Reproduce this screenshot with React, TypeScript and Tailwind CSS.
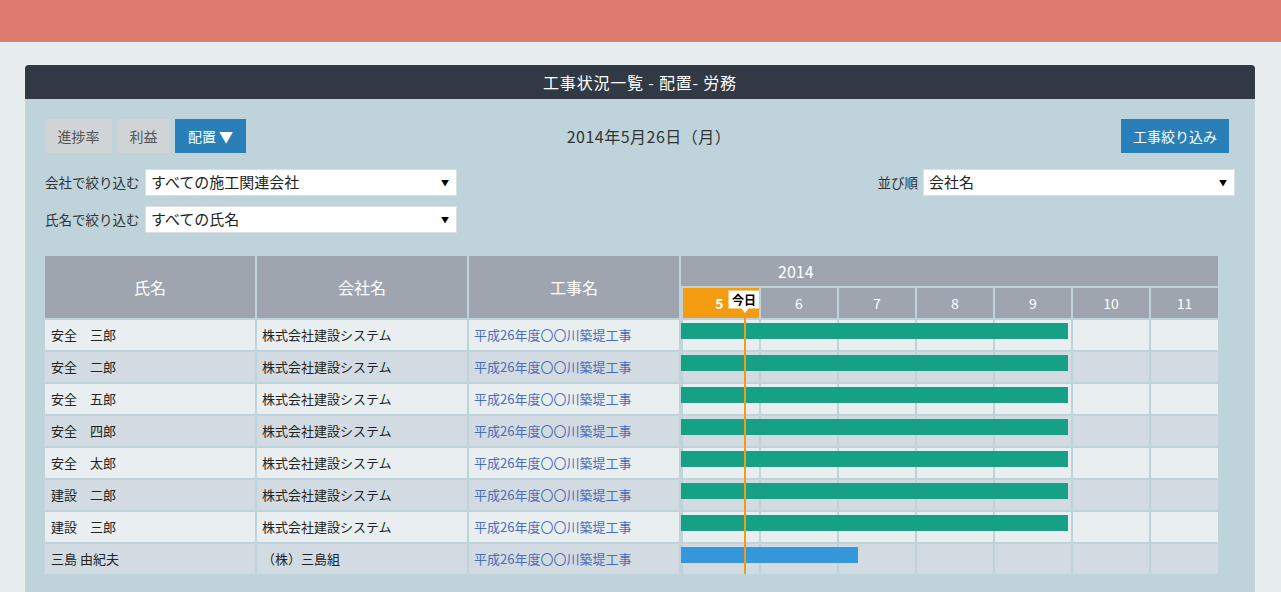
import React from 'react';

const rows = [
  { name: '安全　三郎', company: '株式会社建設システム', bar: 387, color: 'bg-[#16a085]' },
  { name: '安全　二郎', company: '株式会社建設システム', bar: 387, color: 'bg-[#16a085]' },
  { name: '安全　五郎', company: '株式会社建設システム', bar: 387, color: 'bg-[#16a085]' },
  { name: '安全　四郎', company: '株式会社建設システム', bar: 387, color: 'bg-[#16a085]' },
  { name: '安全　太郎', company: '株式会社建設システム', bar: 387, color: 'bg-[#16a085]' },
  { name: '建設　二郎', company: '株式会社建設システム', bar: 387, color: 'bg-[#16a085]' },
  { name: '建設　三郎', company: '株式会社建設システム', bar: 387, color: 'bg-[#16a085]' },
  { name: '三島 由紀夫', company: '（株）三島組', bar: 177, color: 'bg-[#3498db]' },
];

const months = ['5', '6', '7', '8', '9', '10', '11'];

function Select({ value }: { value: string }) {
  return (
    <div className="flex h-[27px] w-[312px] items-center justify-between border border-[#dcdfe1] bg-white pl-[5px] pr-[7px] text-[15px] text-[#222]">
      <span>{value}</span>
      <span className="text-[8px] text-black">▼</span>
    </div>
  );
}

const App = () => {
  return (
    <div
      className="min-h-screen bg-[#e8eef0]"
      style={{ fontFamily: '"Noto Sans CJK JP", "Noto Sans", sans-serif' }}
    >
      {/* top bar */}
      <div className="h-[42px] bg-[#e07b70]" />

      <div className="pl-[25px] pr-[26px] pt-[23px]">
        {/* title */}
        <div className="flex h-[34px] items-center justify-center rounded-t-[4px] bg-[#313945] text-[16px] tracking-[0.8px] text-white">
          工事状況一覧 - 配置- 労務
        </div>

        <div className="bg-[#bfd3da] px-[20px] pb-[30px] pt-[20px]">
          {/* toolbar */}
          <div className="grid h-[34px] grid-cols-[1fr_auto_1fr] items-center">
            <div className="flex h-full gap-[5px] text-[14px]">
              <button className="h-full w-[67px] bg-[#d0d4d6] text-[#555]">進捗率</button>
              <button className="h-full w-[53px] bg-[#d0d4d6] text-[#555]">利益</button>
              <button className="h-full w-[71px] bg-[#2980b9] text-white">配置 ▼</button>
            </div>
            <div className="pl-[18px] text-[16px] tracking-[0.5px] text-[#333]">2014年5月26日（月）</div>
            <div className="flex h-full justify-end pr-[6px]">
              <button className="h-full w-[108px] bg-[#2980b9] text-[14px] text-white">工事絞り込み</button>
            </div>
          </div>

          {/* filters */}
          <div className="mt-[16px] flex justify-between">
            <div className="flex flex-col gap-[10px]">
              <div className="flex items-center gap-[5px] text-[13.5px] text-[#333]">
                <span className="w-[95px]">会社で絞り込む</span>
                <Select value="すべての施工関連会社" />
              </div>
              <div className="flex items-center gap-[5px] text-[13.5px] text-[#333]">
                <span className="w-[95px]">氏名で絞り込む</span>
                <Select value="すべての氏名" />
              </div>
            </div>
            <div className="flex h-[27px] items-center gap-[5px] text-[13.5px] text-[#333]">
              <span>並び順</span>
              <Select value="会社名" />
            </div>
          </div>

          {/* table */}
          <div className="relative mt-[23px] w-[1173px]">
            <div className="grid grid-cols-[210px_210px_210px_537px] gap-[2px]">
              <div className="row-span-2 flex h-[62px] items-center justify-center bg-[#9ea5af] text-[16px] text-white">氏名</div>
              <div className="row-span-2 flex h-[62px] items-center justify-center bg-[#9ea5af] text-[16px] text-white">会社名</div>
              <div className="row-span-2 flex h-[62px] items-center justify-center bg-[#9ea5af] text-[16px] text-white">工事名</div>
              <div className="row-span-2 flex h-[62px] flex-col gap-[2px]">
                <div className="flex h-[30px] items-center bg-[#9ea5af] pl-[97px] text-[16px] text-white">2014</div>
                <div className="flex h-[30px] gap-[2px] pl-[2px]">
                  {months.map((m, i) => (
                    <div
                      key={m}
                      className={
                        i === 0
                          ? 'flex w-[76px] items-center justify-center bg-[#f39c12] pr-[3px] text-[14px] font-bold text-white'
                          : i === 6
                          ? 'flex w-[67px] items-center justify-center bg-[#9ea5af] text-[14px] text-white'
                          : 'flex w-[76px] items-center justify-center bg-[#9ea5af] text-[14px] text-white'
                      }
                    >
                      {m}
                    </div>
                  ))}
                </div>
              </div>

              {rows.map((r, idx) => {
                const bg = idx % 2 === 0 ? 'bg-[#e9eef0]' : 'bg-[#d2dbe1]';
                return (
                  <React.Fragment key={idx}>
                    <div className={`flex h-[30px] items-center pl-[6px] text-[13px] text-[#222] ${bg}`}>{r.name}</div>
                    <div className={`flex h-[30px] items-center pl-[5px] text-[13px] text-[#222] ${bg}`}>{r.company}</div>
                    <div className={`flex h-[30px] items-center pl-[5px] text-[13px] text-[#4a6db5] ${bg}`}>平成26年度〇〇川築堤工事</div>
                    <div className="relative flex h-[30px] gap-[2px] pl-[2px]">
                      {months.map((m, i) => (
                        <div key={m} className={`${i === 6 ? 'w-[67px]' : 'w-[76px]'} ${bg}`} />
                      ))}
                      <div
                        className={`absolute left-0 top-[3px] h-[16px] ${r.color}`}
                        style={{ width: r.bar }}
                      />
                    </div>
                  </React.Fragment>
                );
              })}
            </div>

            {/* today marker */}
            <div className="absolute bottom-0 left-[699px] top-[50px] w-[2px] bg-[#f39c12]" />
            <div className="absolute left-[683px] top-[34px] flex h-[19px] w-[32px] items-center justify-center border border-[#f8c77a] bg-white text-[12px] font-bold text-black">
              今日
              <span className="absolute left-[12px] top-[17px] h-0 w-0 border-x-[4px] border-t-[5px] border-x-transparent border-t-white" />
            </div>
          </div>
        </div>
      </div>
    </div>
  );
};

export default App;
